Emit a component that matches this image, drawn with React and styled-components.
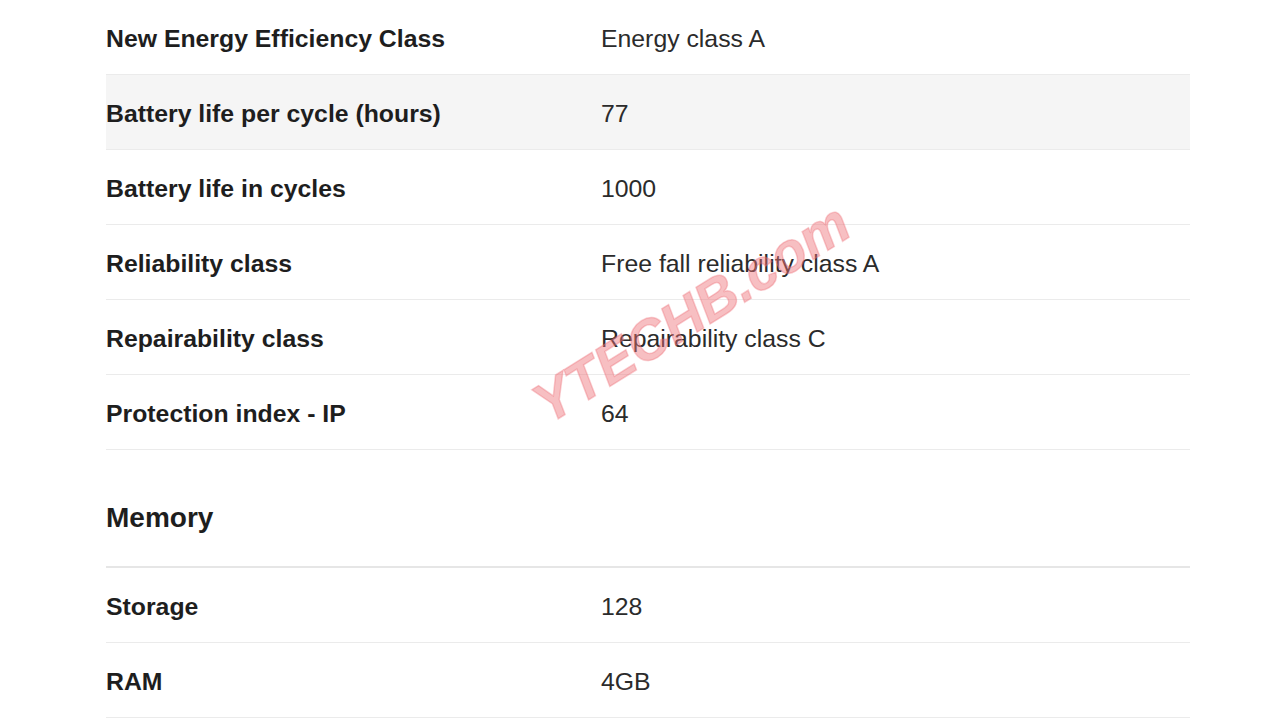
import styled, { createGlobalStyle } from "styled-components";

const GlobalStyle = createGlobalStyle`
  html, body {
    margin: 0;
    padding: 0;
    background: #ffffff;
  }
  body {
    font-family: "Liberation Sans", Arial, sans-serif;
  }
`;

const Page = styled.div`
  position: relative;
  width: 1280px;
  height: 720px;
  overflow: hidden;
  background: #fff;
  padding: 0 90px 0 106px;
  box-sizing: border-box;
`;

const Table = styled.div`
  display: flex;
  flex-direction: column;
  width: 1084px;
`;

const Row = styled.div`
  display: grid;
  grid-template-columns: 495px 1fr;
  align-items: center;
  height: 75px;
  box-sizing: border-box;
  border-bottom: 1px solid #ebebeb;
  background: ${(p) => (p.$shaded ? "#f5f5f5" : "transparent")};
  padding-top: 4px;
`;

const Label = styled.div`
  font-size: 24.8px;
  font-weight: 700;
  color: #1e1e1e;
`;

const Value = styled.div`
  font-size: 24.8px;
  color: #2b2b2b;
`;

const SectionTitle = styled.h2`
  margin: 0;
  height: 118px;
  display: flex;
  align-items: center;
  padding-top: 19px;
  box-sizing: border-box;
  font-size: 28px;
  font-weight: 700;
  color: #1e1e1e;
  border-bottom: 2px solid #e6e6e6;
`;

const Watermark = styled.div`
  position: absolute;
  left: 538px;
  top: 376px;
  font-size: 56px;
  font-weight: 700;
  font-style: italic;
  font-family: "Liberation Sans", Arial, sans-serif;
  color: rgba(238, 112, 120, 0.45);
  -webkit-text-stroke: 1.5px rgba(238, 112, 120, 0.35);
  transform: rotate(-32deg);
  transform-origin: left center;
  white-space: nowrap;
  pointer-events: none;
`;

const general = [
  ["New Energy Efficiency Class", "Energy class A"],
  ["Battery life per cycle (hours)", "77", true],
  ["Battery life in cycles", "1000"],
  ["Reliability class", "Free fall reliability class A"],
  ["Repairability class", "Repairability class C"],
  ["Protection index - IP", "64"],
];

const memory = [
  ["Storage", "128"],
  ["RAM", "4GB"],
];

export default function App() {
  return (
    <>
      <GlobalStyle />
      <Page>
        <Table>
          {general.map(([label, value, shaded]) => (
            <Row key={label} $shaded={shaded}>
              <Label>{label}</Label>
              <Value>{value}</Value>
            </Row>
          ))}
          <SectionTitle>Memory</SectionTitle>
          {memory.map(([label, value]) => (
            <Row key={label}>
              <Label>{label}</Label>
              <Value>{value}</Value>
            </Row>
          ))}
        </Table>
        <Watermark>YTECHB.com</Watermark>
      </Page>
    </>
  );
}
